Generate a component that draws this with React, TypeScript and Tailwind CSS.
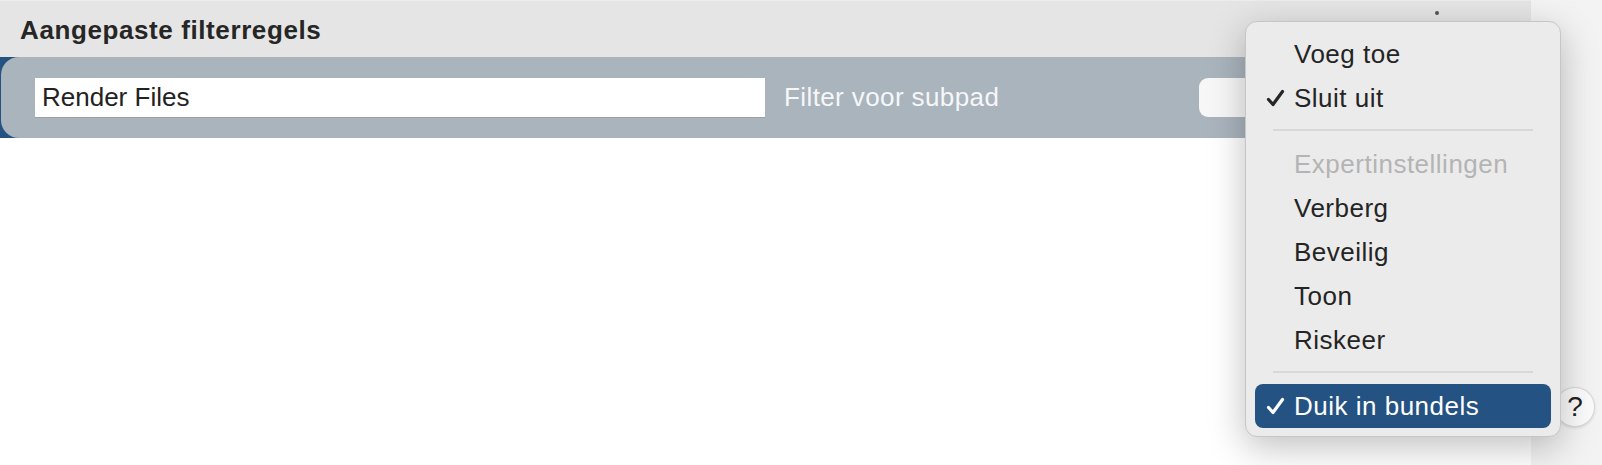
type MenuItem =
  | { kind: "item"; label: string; checked?: boolean; disabled?: boolean; active?: boolean }
  | { kind: "sep" }

const menuItems: MenuItem[] = [
  { kind: "item", label: "Voeg toe" },
  { kind: "item", label: "Sluit uit", checked: true },
  { kind: "sep" },
  { kind: "item", label: "Expertinstellingen", disabled: true },
  { kind: "item", label: "Verberg" },
  { kind: "item", label: "Beveilig" },
  { kind: "item", label: "Toon" },
  { kind: "item", label: "Riskeer" },
  { kind: "sep" },
  { kind: "item", label: "Duik in bundels", checked: true, active: true },
]

function Check({ light }: { light?: boolean }) {
  return (
    <svg width="19" height="18" viewBox="0 0 19 18" fill="none">
      <path
        d="M2.5 10.5 L7 15.5 L16.5 2.5"
        stroke={light ? "#ffffff" : "#262626"}
        strokeWidth="3.2"
        strokeLinecap="round"
        strokeLinejoin="round"
      />
    </svg>
  )
}

function Menu() {
  return (
    <div className="absolute left-[1245px] top-[21px] w-[316px] rounded-[12px] border border-[#c6c6c6] bg-[#ebebeb] pt-[10px] pb-[8px] text-[26px] tracking-[0.5px] shadow-[0_10px_36px_rgba(0,0,0,0.25)]">
      {menuItems.map((it, i) =>
        it.kind === "sep" ? (
          <div key={i} className="h-[22px] pt-[9px]">
            <div className="mx-[27px] h-[2px] bg-[#d8d8d8]" />
          </div>
        ) : (
          <div
            key={i}
            className={`mx-[9px] flex h-[44px] items-center rounded-[8px] pl-[11px] ${
              it.active ? "bg-[#245282] text-white" : it.disabled ? "text-[#b4b4b4]" : "text-[#242424]"
            }`}
          >
            <span className="mr-[9px] flex w-[19px] items-center">
              {it.checked && <Check light={it.active} />}
            </span>
            <span>{it.label}</span>
          </div>
        )
      )}
    </div>
  )
}

export default function App() {
  return (
    <div className="relative flex h-[465px] w-full overflow-hidden bg-[#f3f3f3] font-['Liberation_Sans',Arial,sans-serif] text-[#222]">
      <div className="flex w-[1531px] shrink-0 flex-col bg-white">
        <div className="flex h-[57px] items-center justify-between border-t border-[#ededed] bg-[#e5e5e5] pl-[20px] pr-[92px] pt-[3px]">
          <h2 className="text-[26px] font-bold tracking-[0.6px] text-[#262626]">Aangepaste filterregels</h2>
          <span className="mb-[36px] h-[4px] w-[4px] rounded-full bg-[#555]" />
        </div>
        <div className="h-[81px] bg-[#245282] pl-[1px]">
          <div className="flex h-full items-center rounded-l-[18px] bg-[#aab4bd] pl-[34px]">
            <div className="flex h-[40px] w-[730px] items-center border-b border-[#9aa0a6] bg-white pl-[7px] text-[26px] text-[#222]">
              Render Files
            </div>
            <span className="ml-[19px] text-[26px] tracking-[0.4px] text-[#f6f7f9]">Filter voor subpad</span>
            <div className="ml-auto mr-[162px] h-[39px] w-[170px] rounded-[9px] bg-[#f7f7f7]" />
          </div>
        </div>
        <div className="flex-1 bg-white" />
      </div>
      <div className="flex-1 pl-[24px] pt-[387px]">
        <div className="flex h-[40px] w-[40px] items-center justify-center rounded-full border border-[#d8d8d8] bg-[#fbfbfb] text-[28px] text-[#222] shadow-[0_1px_3px_rgba(0,0,0,0.12)]">
          ?
        </div>
      </div>
      <Menu />
    </div>
  )
}
